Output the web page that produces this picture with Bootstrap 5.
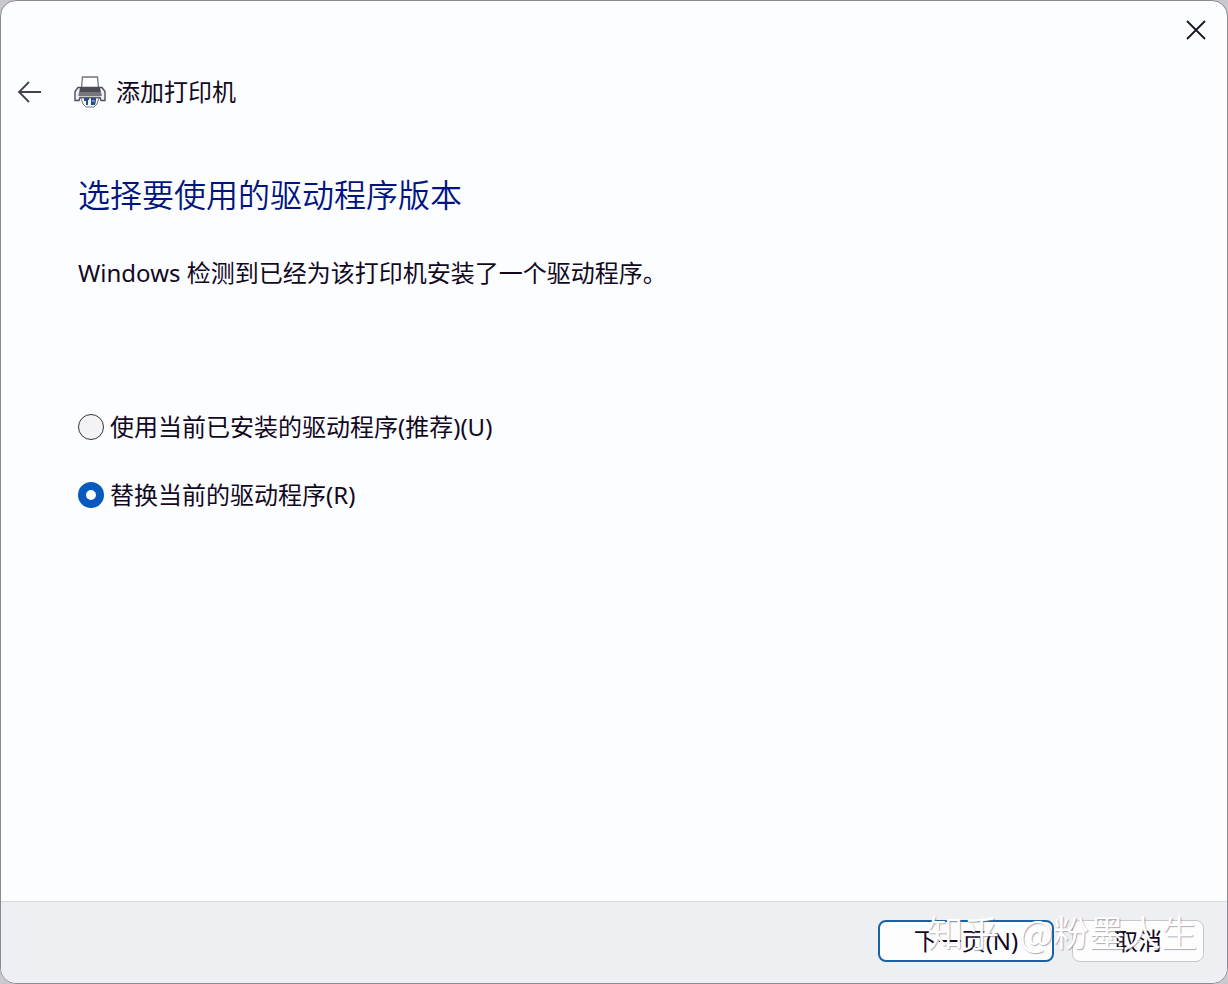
<!DOCTYPE html>
<html lang="zh-CN">
<head>
<meta charset="utf-8">
<meta name="viewport" content="width=device-width, initial-scale=1">
<title>添加打印机</title>
<link href="https://cdn.jsdelivr.net/npm/bootstrap@5.3.0/dist/css/bootstrap.min.css" rel="stylesheet">
<style>
body{font-family:"Noto Sans","Noto Sans CJK SC",sans-serif;font-size:24px;line-height:32px;color:#12091f;background:#c9c8cf}
.wizard{background:#fcfdff;border:1px solid #8b8a94;border-radius:16px;overflow:hidden}
.titlebar{height:58px;padding-right:19px}
.plain{background:none;border:0;padding:0;line-height:0;color:#191622}
.wizard-head{height:66px;padding-left:16px}
.wizard-head h1{font-size:24px;line-height:32px;font-weight:400;margin:0 0 0 10px}
.gap-back{margin-right:31px}
.wizard-body{padding:48px 78px 0 77px;font-weight:400}
.wizard-body h2{font-size:32px;line-height:44px;font-weight:350;color:#001580;margin:0 0 40px}
.wizard-body p{margin:0 0 122px}
.option{display:flex;align-items:center;gap:6px;padding:0;margin:0 0 36px;min-height:32px}
.option .form-check-input{float:none;flex:none;width:26px;height:26px;margin:0;border:1px solid #38343f;background-color:#f3f3f6}
.option .form-check-input:checked{border:8px solid #0759bd;background:#fff}
.wizard-foot{background:#eeeff2;border-top:1px solid #d3dade;padding:18px 23px 21px;gap:18px}
.wizard-foot .btn{font-size:24px;line-height:32px;height:42px;padding:3px;background:#fdfdfe;border:1px solid #c6c7ce;border-radius:8px;color:#12091f;font-weight:400}
.wizard-foot .btn-next{width:176px;border:2px solid #1863a7;padding:2px}
.btn-cancel{width:132px}
.watermark{position:absolute;right:30px;bottom:30px;gap:20px;font-family:"Noto Sans CJK SC",sans-serif;font-size:36px;line-height:44px;font-weight:350;color:#fff;text-shadow:1px 1px 1px #77778899;pointer-events:none;white-space:nowrap}
</style>
</head>
<body>
<main class="wizard d-flex flex-column min-vh-100 position-relative">
  <div class="titlebar d-flex justify-content-end align-items-center">
    <button class="plain" type="button" aria-label="关闭"><svg width="24" height="24" viewBox="0 0 24 24" fill="none" stroke="currentColor" stroke-width="1.8"><path d="M3 3l18 18M21 3L3 21"/></svg></button>
  </div>
  <header class="wizard-head d-flex align-items-center">
    <button class="plain gap-back" type="button" aria-label="返回"><svg width="26" height="26" viewBox="0 0 26 26" fill="none" stroke="#444050" stroke-width="1.8"><path d="M24 13H2.500M12 3L2 13l10 10"/></svg></button>
    <svg width="32" height="32" viewBox="0 0 32 32" aria-hidden="true">
      <path d="M7.500 12L8.500 1h15l1 11z" fill="#fff" stroke="#73717f" stroke-width="1.300"/>
      <path d="M4 11.500h24l3 4v9h-4l-1-3H6l-1 3H1v-9z" fill="#f0f0f6" stroke="#4e4c5d" stroke-width="1.400"/>
      <path d="M6 11.500h20l1.500 8h-23z" fill="#4c4b51"/><path d="M5 16h22l.5 4h-23z" fill="#77767c"/>
      <path d="M7 22h18l-2 6-3 3H12l-3-3z" fill="#f5faff" stroke="#777787"/>
      <path d="M10 22h5v2h-1v5h-2v-4h-2zM17 22h5v3l-1 4h-4z" fill="#284c84"/><path d="M18 25h3" stroke="#a7d4ef" stroke-width="1.200"/>
    </svg>
    <h1>添加打印机</h1>
  </header>
  <section class="wizard-body flex-grow-1">
    <h2>选择要使用的驱动程序版本</h2>
    <p>Windows 检测到已经为该打印机安装了一个驱动程序。</p>
    <form id="driver">
      <div class="option"><input class="form-check-input" type="radio" name="driver" id="keep"><label for="keep">使用当前已安装的驱动程序(推荐)(U)</label></div>
      <div class="option"><input class="form-check-input" type="radio" name="driver" id="replace" checked><label for="replace">替换当前的驱动程序(R)</label></div>
    </form>
  </section>
  <footer class="wizard-foot d-flex justify-content-end">
    <button class="btn btn-next" type="submit" form="driver">下一页(N)</button>
    <button class="btn btn-cancel" type="button">取消</button>
  </footer>
  <div class="watermark d-flex"><span>知乎</span><span>@粉墨人生</span></div>
</main>
<script src="https://cdn.jsdelivr.net/npm/bootstrap@5.3.0/dist/js/bootstrap.bundle.min.js"></script>
</body>
</html>
